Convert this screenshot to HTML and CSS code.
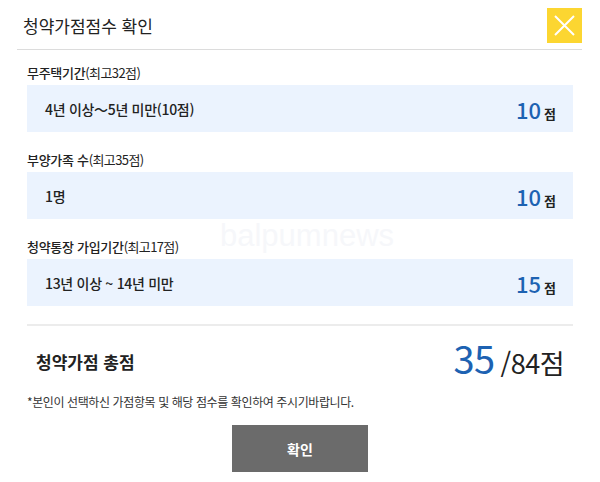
FILE: index.html
```html
<!DOCTYPE html>
<html lang="ko">
<head>
    <meta charset="UTF-8">
    <meta name="viewport" content="width=device-width, initial-scale=1.0">
    <title>청약가점점수 확인</title>
    <link rel="stylesheet" href="styles.css">
</head>
<body>
    <div class="modal">
        <div class="modal-header">
            <h2 class="modal-title">청약가점점수 확인</h2>
            <button class="close-btn" aria-label="닫기">
                <svg width="35" height="35" viewBox="0 0 35 35">
                    <path d="M8 8 L27 27 M27 8 L8 27" stroke="#fff" stroke-width="2" fill="none"/>
                </svg>
            </button>
        </div>

        <div class="modal-body">
            <div class="field">
                <div class="field-label">무주택기간<span class="max">(최고32점)</span></div>
                <div class="field-box">
                    <span class="field-value">4년 이상～5년 미만(10점)</span>
                    <span class="score"><b>10</b>점</span>
                </div>
            </div>

            <div class="field">
                <div class="field-label">부양가족 수<span class="max">(최고35점)</span></div>
                <div class="field-box">
                    <span class="field-value">1명</span>
                    <span class="score"><b>10</b>점</span>
                </div>
            </div>

            <div class="field">
                <div class="field-label">청약통장 가입기간<span class="max">(최고17점)</span></div>
                <div class="field-box">
                    <span class="field-value">13년 이상 ~ 14년 미만</span>
                    <span class="score"><b>15</b>점</span>
                </div>
            </div>

            <div class="total">
                <span class="total-label">청약가점 총점</span>
                <span class="total-score"><b>35</b>/84점</span>
            </div>

            <p class="notice">*본인이 선택하신 가점항목 및 해당 점수를 확인하여 주시기바랍니다.</p>

            <div class="actions">
                <button class="confirm-btn">확인</button>
            </div>
        </div>

        <div class="watermark">balpumnews</div>
    </div>
</body>
</html>
```

FILE: styles.css
```css
* {
    margin: 0;
    padding: 0;
    box-sizing: border-box;
}

body {
    font-family: 'Noto Sans CJK KR', 'Noto Sans', sans-serif;
    background: #fff;
    color: #222;
}

.modal {
    position: relative;
    width: 600px;
    height: 482px;
    padding: 8px 18px 0 17px;
}

.modal-header {
    display: flex;
    justify-content: space-between;
    align-items: center;
    border-bottom: 1px solid #dcdcdc;
    padding-bottom: 6px;
}

.modal-title {
    font-size: 17px;
    font-weight: 400;
    padding-left: 6px;
    color: #222;
}

.close-btn {
    width: 35px;
    height: 35px;
    border: none;
    background: #fcd631;
    display: flex;
}

.modal-body {
    padding: 0 9px 0 10px;
}

.field {
    margin-top: 19px;
}

.field:first-child {
    margin-top: 14px;
}

.field-label {
    font-size: 13px;
    font-weight: 500;
    line-height: 18px;
    margin-bottom: 3px;
    letter-spacing: -0.3px;
}

.field-label .max {
    font-weight: 400;
    letter-spacing: -0.6px;
}

.field-box {
    height: 47px;
    background: #ebf3fe;
    display: flex;
    justify-content: space-between;
    align-items: center;
    padding: 0 17px 0 18px;
}

.field-value {
    font-size: 14px;
    font-weight: 500;
    letter-spacing: -0.3px;
}

.score {
    font-size: 13px;
    font-weight: 700;
    display: flex;
    align-items: baseline;
    gap: 3px;
    padding-top: 4px;
}

.score b {
    font-size: 22px;
    font-weight: 500;
    color: #1d62b2;
    line-height: 1;
}

.total {
    margin-top: 18px;
    border-top: 2px solid #ececec;
    height: 70px;
    display: flex;
    justify-content: space-between;
    align-items: center;
    padding: 0 9px;
}

.total-label {
    font-size: 17px;
    font-weight: 700;
    padding-top: 3px;
}

.total-score {
    font-size: 27px;
    font-weight: 400;
    display: flex;
    align-items: baseline;
    gap: 6px;
    letter-spacing: -0.5px;
}

.total-score b {
    font-size: 38px;
    font-weight: 400;
    color: #1d62b2;
    line-height: 1;
}

.notice {
    font-size: 12px;
    line-height: 16px;
    letter-spacing: -0.4px;
    color: #333;
    margin-top: 0;
}

.actions {
    display: flex;
    justify-content: center;
    margin-top: 15px;
}

.confirm-btn {
    width: 136px;
    height: 47px;
    border: none;
    background: #6b6b6b;
    color: #fff;
    font-family: inherit;
    font-size: 14px;
    font-weight: 700;
}

.watermark {
    position: absolute;
    top: 218px;
    left: 220px;
    font-family: 'Liberation Sans', sans-serif;
    font-size: 31px;
    color: #f6f7fa;
    pointer-events: none;
}
```
